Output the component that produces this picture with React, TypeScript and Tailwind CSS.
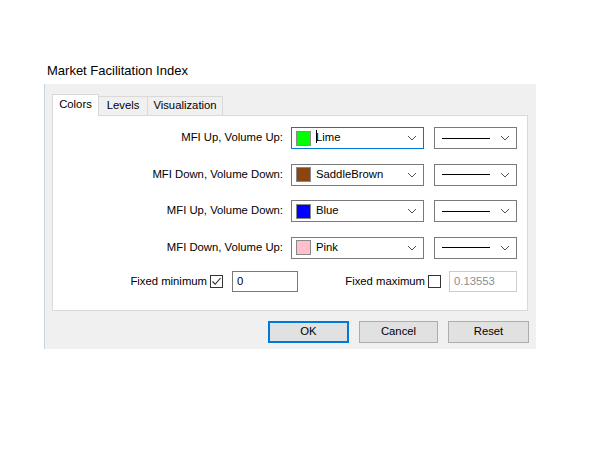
import React from "react";

const rows = [
  { label: "MFI Up, Volume Up:", name: "Lime", color: "#00ff00", focused: true },
  { label: "MFI Down, Volume Down:", name: "SaddleBrown", color: "#8b4513" },
  { label: "MFI Up, Volume Down:", name: "Blue", color: "#0000ff" },
  { label: "MFI Down, Volume Up:", name: "Pink", color: "#ffc0cb" },
];

function Chevron() {
  return (
    <svg width="10" height="6" viewBox="0 0 10 6" className="shrink-0">
      <path d="M1 1 L5 5 L9 1" fill="none" stroke="#505050" strokeWidth="1" />
    </svg>
  );
}

function CheckBox({ checked }: { checked?: boolean }) {
  return (
    <div className="w-[13px] h-[13px] border border-[#333] bg-white flex items-center justify-center">
      {checked && (
        <svg width="11" height="11" viewBox="0 0 11 11">
          <path d="M1.5 5.5 L4.2 8.3 L9.5 2" fill="none" stroke="#222" strokeWidth="1.1" />
        </svg>
      )}
    </div>
  );
}

export default function App() {
  return (
    <div
      className="w-[610px] h-[453px] bg-white text-[#000] text-[11.3px] leading-none"
      style={{ fontFamily: '"Liberation Sans", Arial, sans-serif' }}
    >
      <div className="pt-[64px] pl-[47px] text-[13px] h-[84px]">Market Facilitation Index</div>
      <div className="ml-[44px] w-[492px] h-[265px] bg-[#f0f0f0] border-l border-[#c9d3de] pl-[7px] pt-[9px]">
        {/* tabs */}
        <div className="flex items-end h-[22px]">
          <div className="h-[22px] w-[47px] bg-white border border-b-0 border-[#d9d9d9] flex items-center justify-center relative z-10 -mb-px pb-[2px]">
            Colors
          </div>
          <div className="h-[19px] w-[49px] bg-[#f0f0f0] border border-l-0 border-b-0 border-[#d9d9d9] flex items-center justify-center">
            Levels
          </div>
          <div className="h-[19px] w-[75px] bg-[#f0f0f0] border border-l-0 border-b-0 border-[#d9d9d9] flex items-center justify-center">
            Visualization
          </div>
        </div>
        {/* panel */}
        <div className="w-[476px] h-[196px] bg-white border border-[#d9d9d9] pt-[11px] flex flex-col gap-[14.5px]">
          {rows.map((r) => (
            <div key={r.name} className="flex items-center h-[22px]">
              <div className="w-[230px] text-right">{r.label}</div>
              <div
                className={`ml-[8px] w-[133px] h-[22px] bg-white border flex items-center pl-[4px] pr-[6px] ${
                  r.focused ? "border-[#0078d7]" : "border-[#7a7a7a]"
                }`}
              >
                <div className="w-[15px] h-[15px] border border-[#8a8a8a]" style={{ backgroundColor: r.color }} />
                <div className="ml-[5px] flex-1 flex items-center relative">
                  {r.focused && <div className="absolute left-0 top-[-2px] w-px h-[13px] bg-black" />}
                  {r.name}
                </div>
                <Chevron />
              </div>
              <div className="ml-[10px] w-[83px] h-[22px] bg-white border border-[#7a7a7a] flex items-center pl-[7px] pr-[6px]">
                <div className="w-[48px] h-px bg-black" />
                <div className="flex-1" />
                <Chevron />
              </div>
            </div>
          ))}
          <div className="flex items-center h-[21px] -mt-[2px]">
            <div className="w-[245px] flex items-center justify-end">
              <span>Fixed minimum</span>
              <div className="ml-[3px]">
                <CheckBox checked />
              </div>
              <div className="ml-[9px] w-[66px] h-[21px] border border-[#7a7a7a] bg-white flex items-center pl-[4px]">0</div>
            </div>
            <div className="w-[219px] flex items-center justify-end">
              <span>Fixed maximum</span>
              <div className="ml-[3px]">
                <CheckBox />
              </div>
              <div className="ml-[8px] w-[68px] h-[21px] border border-[#cccccc] bg-white flex items-center pl-[4px] text-[#8d8d8d]">
                0.13553
              </div>
            </div>
          </div>
        </div>
        {/* buttons */}
        <div className="flex justify-end gap-[10px] w-[477px] mt-[10px]">
          <div className="w-[81px] h-[22px] bg-[#e1e1e1] border-2 border-[#0078d7] flex items-center justify-center">OK</div>
          <div className="w-[79px] h-[22px] bg-[#e1e1e1] border border-[#adadad] flex items-center justify-center">Cancel</div>
          <div className="w-[81px] h-[22px] bg-[#e1e1e1] border border-[#adadad] flex items-center justify-center">Reset</div>
        </div>
      </div>
    </div>
  );
}
